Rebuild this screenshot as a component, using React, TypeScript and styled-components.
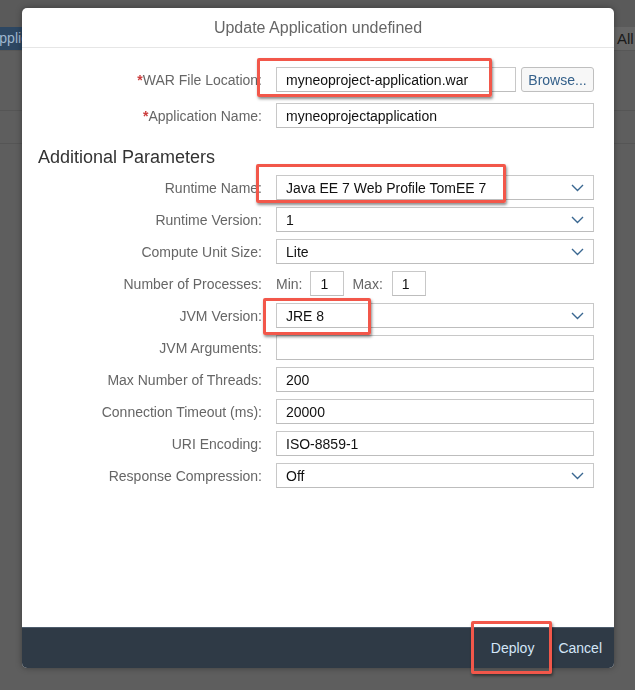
import React from "react";
import styled, { createGlobalStyle } from "styled-components";

const GlobalStyle = createGlobalStyle`
  html, body { margin: 0; padding: 0; }
  body {
    background: #5e5e5e;
    font-family: "Liberation Sans", Arial, sans-serif;
    overflow: hidden;
  }
`;

const Page = styled.div`
  width: 635px;
  height: 690px;
  display: flex;
  flex-direction: column;
  background: #5e5e5e;
`;

const TopStrip = styled.div`
  height: 27px;
  background: #5a5a5a;
`;

const Toolbar = styled.div`
  height: 23px;
  display: flex;
  justify-content: space-between;
  align-items: stretch;
  border-bottom: 1px solid #575757;
  background: #606060;
`;

const PageButton = styled.div`
  background: #2d4762;
  color: #9fb7cf;
  font-size: 14px;
  line-height: 23px;
  padding: 0 6px;
  margin-left: -16px;
`;

const PageTab = styled.div`
  background: #666666;
  color: #1a1a1a;
  font-size: 15px;
  line-height: 23px;
  padding: 0 0 0 3px;
  width: 18px;
  white-space: nowrap;
  border-left: 1px solid #575757;
`;

const PageRow = styled.div<{ $h: number }>`
  height: ${(p) => p.$h}px;
  border-bottom: 1px solid #555555;
`;

const Dialog = styled.div`
  position: fixed;
  top: 8px;
  left: 22px;
  width: 592px;
  height: 660px;
  background: #ffffff;
  border-radius: 5px;
  display: flex;
  flex-direction: column;
  box-shadow: 0 0 6px rgba(0, 0, 0, 0.35);
`;

const Header = styled.div`
  height: 39px;
  border-bottom: 1px solid #e6e6e6;
  display: flex;
  align-items: center;
  justify-content: center;
  color: #666666;
  font-size: 16px;
`;

const Body = styled.div`
  flex: 1;
  display: flex;
  flex-direction: column;
  padding: 19px 20px 0 0;
`;

const Section = styled.div<{ $gap: number }>`
  display: flex;
  flex-direction: column;
  gap: ${(p) => p.$gap}px;
`;

const SectionTitle = styled.div`
  margin: 17px 0 6px 16px;
  font-size: 18px;
  line-height: 24px;
  color: #333333;
`;

const Row = styled.div`
  display: grid;
  grid-template-columns: 240px 1fr;
  column-gap: 14px;
  align-items: center;
  height: 25px;
`;

const Label = styled.label`
  text-align: right;
  font-size: 14px;
  color: #666666;
  white-space: nowrap;
`;

const Req = styled.span`
  color: #cc3d3d;
  font-weight: bold;
`;

const FieldLine = styled.div`
  display: flex;
  align-items: center;
  gap: 5px;
  height: 25px;
`;

const Input = styled.div<{ $w?: number }>`
  box-sizing: border-box;
  height: 25px;
  ${(p) => (p.$w ? `width: ${p.$w}px;` : "flex: 1;")}
  border: 1px solid #c8c8c8;
  border-bottom-color: #bdbdbd;
  background: #fff;
  font-size: 14px;
  color: #111;
  padding: 0 9px;
  display: flex;
  align-items: center;
  justify-content: space-between;
  white-space: nowrap;
`;

const BrowseButton = styled.div`
  box-sizing: border-box;
  width: 73px;
  height: 25px;
  border: 1px solid #bfbfbf;
  border-radius: 3px;
  background: #f7f7f7;
  color: #34608a;
  font-size: 14px;
  display: flex;
  align-items: center;
  justify-content: center;
`;

const InlineText = styled.span<{ $ml?: number; $mr?: number }>`
  font-size: 14px;
  color: #666;
  margin-left: ${(p) => p.$ml ?? 0}px;
  margin-right: ${(p) => p.$mr ?? 0}px;
`;

const Footer = styled.div`
  height: 40px;
  background: #2f3a46;
  border-top: 1px solid #4d5c6c;
  border-radius: 0 0 5px 5px;
  display: flex;
  justify-content: flex-end;
  align-items: center;
`;

const FooterButton = styled.div`
  color: #d4e6f8;
  font-size: 14px;
  padding: 0 12px;
  line-height: 40px;
`;

const Highlight = styled.div<{ $t: number; $l: number; $w: number; $h: number }>`
  position: absolute;
  top: ${(p) => p.$t}px;
  left: ${(p) => p.$l}px;
  width: ${(p) => p.$w}px;
  height: ${(p) => p.$h}px;
  box-sizing: border-box;
  border: 3px solid #f2574a;
  border-radius: 2px;
  box-shadow: 1px 2px 3px rgba(0, 0, 0, 0.45);
  pointer-events: none;
`;

const Chevron = () => (
  <svg width="13" height="8" viewBox="0 0 13 8" fill="none">
    <path d="M1 1l5.5 5.5L12 1" stroke="#3a6791" strokeWidth="1.4" />
  </svg>
);

const Select = ({ value }: { value: string }) => (
  <Input>
    <span>{value}</span>
    <Chevron />
  </Input>
);

export default function App() {
  return (
    <>
      <GlobalStyle />
      <Page>
        <TopStrip />
        <Toolbar>
          <PageButton>Applications</PageButton>
          <PageTab>All</PageTab>
        </Toolbar>
        <PageRow $h={59} />
        <PageRow $h={32} />
      </Page>
      <Dialog>
        <Header>Update Application undefined</Header>
        <Body>
          <Section $gap={11}>
            <Row>
              <Label>
                <Req>*</Req>WAR File Location:
              </Label>
              <FieldLine>
                <Input>myneoproject-application.war</Input>
                <BrowseButton>Browse...</BrowseButton>
              </FieldLine>
            </Row>
            <Row>
              <Label>
                <Req>*</Req>Application Name:
              </Label>
              <Input>myneoprojectapplication</Input>
            </Row>
          </Section>
          <SectionTitle>Additional Parameters</SectionTitle>
          <Section $gap={7}>
            <Row>
              <Label>Runtime Name:</Label>
              <Select value="Java EE 7 Web Profile TomEE 7" />
            </Row>
            <Row>
              <Label>Runtime Version:</Label>
              <Select value="1" />
            </Row>
            <Row>
              <Label>Compute Unit Size:</Label>
              <Select value="Lite" />
            </Row>
            <Row>
              <Label>Number of Processes:</Label>
              <FieldLine>
                <InlineText $mr={3}>Min:</InlineText>
                <Input $w={34}>1</Input>
                <InlineText $ml={3} $mr={4}>Max:</InlineText>
                <Input $w={34}>1</Input>
              </FieldLine>
            </Row>
            <Row>
              <Label>JVM Version:</Label>
              <Select value="JRE 8" />
            </Row>
            <Row>
              <Label>JVM Arguments:</Label>
              <Input />
            </Row>
            <Row>
              <Label>Max Number of Threads:</Label>
              <Input>200</Input>
            </Row>
            <Row>
              <Label>Connection Timeout (ms):</Label>
              <Input>20000</Input>
            </Row>
            <Row>
              <Label>URI Encoding:</Label>
              <Input>ISO-8859-1</Input>
            </Row>
            <Row>
              <Label>Response Compression:</Label>
              <Select value="Off" />
            </Row>
          </Section>
        </Body>
        <Footer>
          <FooterButton>Deploy</FooterButton>
          <FooterButton>Cancel</FooterButton>
        </Footer>
        <Highlight $t={50} $l={235} $w={235} $h={39} />
        <Highlight $t={156} $l={234} $w={250} $h={39} />
        <Highlight $t={290} $l={241} $w={108} $h={37} />
        <Highlight $t={613} $l={449} $w={81} $h={53} />
      </Dialog>
    </>
  );
}
